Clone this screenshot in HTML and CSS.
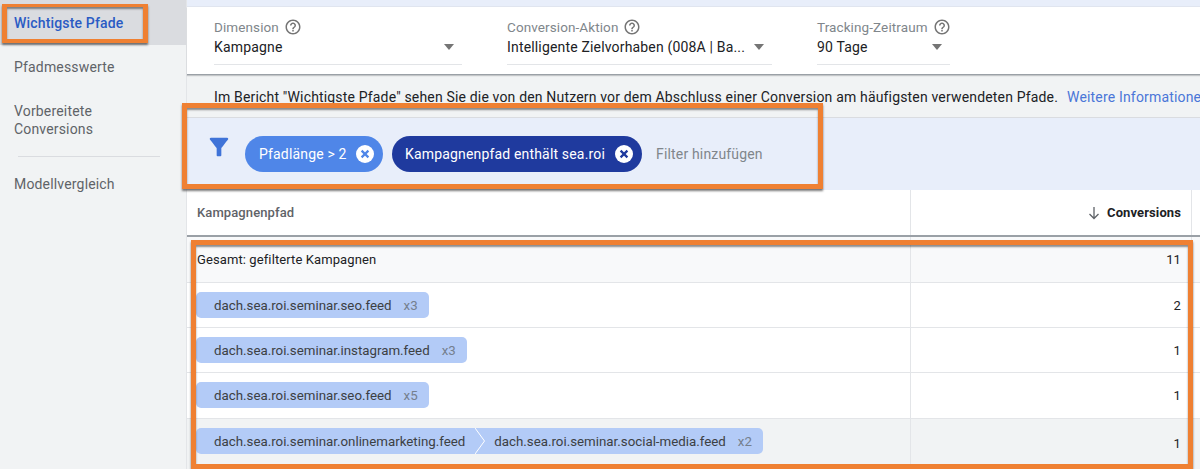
FILE: index.html
```html
<!DOCTYPE html>
<html lang="de">
<head>
<meta charset="utf-8">
<title>Wichtigste Pfade</title>
<link rel="stylesheet" href="styles.css">
</head>
<body>
<div class="page">
  <nav class="sidebar">
    <a class="nav-item active">Wichtigste Pfade</a>
    <a class="nav-item">Pfadmesswerte</a>
    <a class="nav-item multi">Vorbereitete Conversions</a>
    <div class="nav-divider"></div>
    <a class="nav-item last">Modellvergleich</a>
  </nav>
  <main class="main">
    <div class="top-strip"></div>
    <section class="controls">
      <div class="control c1">
        <div class="control-label">Dimension
          <svg class="help" viewBox="0 0 24 24"><path d="M11 18h2v-2h-2v2zm1-16C6.48 2 2 6.48 2 12s4.48 10 10 10 10-4.48 10-10S17.52 2 12 2zm0 18c-4.41 0-8-3.59-8-8s3.59-8 8-8 8 3.59 8 8-3.59 8-8 8zm0-14c-2.21 0-4 1.79-4 4h2c0-1.1.9-2 2-2s2 .9 2 2c0 2-3 1.75-3 5h2c0-2.25 3-2.5 3-5 0-2.21-1.79-4-4-4z"/></svg>
        </div>
        <div class="control-value"><span>Kampagne</span><i class="caret"></i></div>
      </div>
      <div class="control c2">
        <div class="control-label">Conversion-Aktion
          <svg class="help" viewBox="0 0 24 24"><path d="M11 18h2v-2h-2v2zm1-16C6.48 2 2 6.48 2 12s4.48 10 10 10 10-4.48 10-10S17.52 2 12 2zm0 18c-4.41 0-8-3.59-8-8s3.59-8 8-8 8 3.59 8 8-3.59 8-8 8zm0-14c-2.21 0-4 1.79-4 4h2c0-1.1.9-2 2-2s2 .9 2 2c0 2-3 1.75-3 5h2c0-2.25 3-2.5 3-5 0-2.21-1.79-4-4-4z"/></svg>
        </div>
        <div class="control-value"><span>Intelligente Zielvorhaben (008A | Ba...</span><i class="caret"></i></div>
      </div>
      <div class="control c3">
        <div class="control-label">Tracking-Zeitraum
          <svg class="help" viewBox="0 0 24 24"><path d="M11 18h2v-2h-2v2zm1-16C6.48 2 2 6.48 2 12s4.48 10 10 10 10-4.48 10-10S17.52 2 12 2zm0 18c-4.41 0-8-3.59-8-8s3.59-8 8-8 8 3.59 8 8-3.59 8-8 8zm0-14c-2.21 0-4 1.79-4 4h2c0-1.1.9-2 2-2s2 .9 2 2c0 2-3 1.75-3 5h2c0-2.25 3-2.5 3-5 0-2.21-1.79-4-4-4z"/></svg>
        </div>
        <div class="control-value"><span>90 Tage</span><i class="caret"></i></div>
      </div>
    </section>
    <section class="info">
      <span>Im Bericht "Wichtigste Pfade" sehen Sie die von den Nutzern vor dem Abschluss einer Conversion am häufigsten verwendeten Pfade.</span>
      <a class="info-link">Weitere Informationen</a>
    </section>
    <section class="filters">
      <svg class="filter-icon" viewBox="0 0 24 24"><path d="M4.25 5.61C6.27 8.2 10 13 10 13v6c0 .55.45 1 1 1h2c.55 0 1-.45 1-1v-6s3.72-4.8 5.74-7.39c.51-.66.04-1.61-.79-1.61H5.04c-.83 0-1.3.95-.79 1.61z"/></svg>
      <div class="pill pill-light">
        <span>Pfadlänge &gt; 2</span>
        <svg class="pill-x" viewBox="0 0 18 18"><circle cx="9" cy="9" r="9" fill="#fff"/><path d="M5.6 5.6l6.8 6.8M12.4 5.6l-6.8 6.8" stroke="#4f86e8" stroke-width="2.2"/></svg>
      </div>
      <div class="pill pill-dark">
        <span>Kampagnenpfad enthält sea.roi</span>
        <svg class="pill-x" viewBox="0 0 18 18"><circle cx="9" cy="9" r="9" fill="#fff"/><path d="M5.6 5.6l6.8 6.8M12.4 5.6l-6.8 6.8" stroke="#1f3a9e" stroke-width="2.2"/></svg>
      </div>
      <span class="add-filter">Filter hinzufügen</span>
    </section>
    <section class="table">
      <div class="row head">
        <div class="cell">Kampagnenpfad</div>
        <div class="cell num">
          <svg class="sort" viewBox="0 0 14 14"><path d="M7 1v11.500M2.500 8L7 12.500 11.500 8" fill="none" stroke="#5f6368" stroke-width="1.3"/></svg>
          <b>Conversions</b>
        </div>
        <div class="cell rest"></div>
      </div>
      <div class="row total">
        <div class="cell">Gesamt: gefilterte Kampagnen</div>
        <div class="cell num">11</div>
        <div class="cell rest"></div>
      </div>
      <div class="row">
        <div class="cell"><div class="path"><span>dach.sea.roi.seminar.seo.feed</span><em>x3</em></div></div>
        <div class="cell num">2</div>
        <div class="cell rest"></div>
      </div>
      <div class="row">
        <div class="cell"><div class="path"><span>dach.sea.roi.seminar.instagram.feed</span><em>x3</em></div></div>
        <div class="cell num">1</div>
        <div class="cell rest"></div>
      </div>
      <div class="row tall">
        <div class="cell"><div class="path"><span>dach.sea.roi.seminar.seo.feed</span><em>x5</em></div></div>
        <div class="cell num">1</div>
        <div class="cell rest"></div>
      </div>
      <div class="row hover">
        <div class="cell">
          <div class="path">
            <span>dach.sea.roi.seminar.onlinemarketing.feed</span>
            <svg class="chev" viewBox="0 0 10 26"><path d="M0 0l9.500 13L0 26" fill="none" stroke="#fff" stroke-width="1"/></svg>
            <span>dach.sea.roi.seminar.social-media.feed</span><em>x2</em>
          </div>
        </div>
        <div class="cell num">1</div>
        <div class="cell rest"></div>
      </div>
    </section>
  </main>
</div>
<div class="mark mark-nav"></div>
<div class="mark mark-filter"></div>
<div class="mark mark-table"></div>
</body>
</html>
```

FILE: styles.css
```css
* { box-sizing: border-box; }
html, body { margin: 0; height: 469px; overflow: hidden; }
body { font-family: Roboto, "Liberation Sans", sans-serif; font-size: 14px; letter-spacing: .17px; color: #202124; background: #fff; position: relative; }

.page { display: flex; height: 469px; width: 1200px; }

.sidebar { width: 187px; flex: none; background: #f1f3f4; border-right: 1px solid #e3e5e8; }
.nav-item { display: block; padding: 0 14px; color: #5f6368; height: 44px; line-height: 44px; }
.nav-item.active { height: 45px; line-height: 46px; background: #dadce0; color: #2a5bc4; font-weight: 500; }
.nav-item.multi { height: auto; line-height: 18px; padding: 13px 14px 0; width: 130px; }
.nav-divider { height: 1px; background: #dadce0; margin: 18px 26px 0 18px; }
.nav-item.last { margin-top: 5px; height: 44px; }

.main { flex: 1; min-width: 0; display: flex; flex-direction: column; }
.top-strip { height: 7px; background: #e8eefa; border-bottom: 1px solid #e0e5ef; flex: none; }

.controls { height: 68px; flex: none; background: #fff; display: flex; gap: 45px; padding: 11px 0 0 27px; border-bottom: 1px solid #9aa0a6; box-shadow: 0 1px 1px rgba(60,64,67,.25); position: relative; }
.control { height: 47px; border-bottom: 1px solid #e3e5e8; }
.c1 { width: 248px; }
.c2 { width: 265px; }
.c3 { width: 133px; }
.control-label { display: flex; align-items: center; gap: 5px; height: 18px; color: #80868b; font-size: 13.5px; letter-spacing: .1px; white-space: nowrap; }
.help { width: 18px; height: 18px; fill: #757575; flex: none; }
.control-value { display: flex; justify-content: space-between; align-items: center; height: 20px; margin-top: 1px; color: #202124; padding-right: 8px; white-space: nowrap; }
.caret { width: 0; height: 0; border-left: 5.5px solid transparent; border-right: 5.5px solid transparent; border-top: 6px solid #757575; }

.info { height: 43px; flex: none; background: #f1f3f4; border-bottom: 1px solid #dadce0; padding: 13px 0 0 27px; display: flex; white-space: nowrap; line-height: 18px; overflow: hidden; }
.info-link { margin-left: 9px; color: #4a76d8; }

.filters { height: 72px; flex: none; background: #e8eefa; display: flex; align-items: center; padding: 0 0 0 18px; }
.filter-icon { width: 28px; height: 28px; fill: #3f73d8; margin-right: 12px; margin-top: -15px; flex: none; }
.pill { height: 36px; border-radius: 18px; color: #fff; display: flex; align-items: center; justify-content: space-between; }
.pill-light { width: 138px; background: #4f86e8; padding: 0 9px 0 14px; margin-right: 9px; }
.pill-dark { width: 250px; background: #1f3a9e; padding: 0 9px 0 13px; margin-right: 14px; }
.pill-x { width: 18px; height: 18px; flex: none; }
.add-filter { color: #80868b; }

.table { flex: 1; min-height: 0; display: flex; flex-direction: column; }
.row { display: grid; grid-template-columns: 723px 281px 9px; height: 45px; flex: none; border-bottom: 1px solid #e3e5e8; font-size: 13px; letter-spacing: .1px; }
.cell { padding: 0 10px; display: flex; align-items: center; white-space: nowrap; min-width: 0; }
.cell + .cell { border-left: 1px solid #e3e5e8; }
.cell.rest { padding: 0; }
.num { justify-content: flex-end; }
.head { height: 47px; border-bottom: 2px solid #9aa0a6; color: #5f6368; font-weight: 500; }
.head b { color: #202124; font-weight: 700; }
.sort { width: 14px; height: 14px; margin-right: 6px; }
.total { height: 46px; background: #f8f9fa; }
.total .cell { align-items: flex-start; padding-top: 15px; }
.tall { height: 46px; }
.tall .cell { padding-bottom: 1px; }
.hover { background: #f1f3f4; height: 50px; border-bottom: 0; }
.hover .cell:first-child { padding-bottom: 6px; }
.hover .num { padding-bottom: 2px; }

.path { display: flex; align-items: center; height: 26px; margin-left: -1px; padding: 0 11px 0 18px; background: #b3cbf7; border-radius: 5px; color: #3c4043; font-size: 13.3px; letter-spacing: 0; }
.path em { font-style: normal; color: #757f8e; margin-left: 12px; }
.chev { width: 10px; height: 26px; margin: 0 9px 0 10px; flex: none; }

.mark { position: absolute; border: 5px solid #ef8032; box-shadow: 0 2px 2px rgba(50,50,50,.65), inset 0 2px 2px rgba(50,50,50,.55); pointer-events: none; }
.mark-nav { left: 2px; top: 4px; width: 146px; height: 39px; border-top-width: 3px; border-bottom-width: 4px; }
.mark-filter { left: 182px; top: 103px; width: 641px; height: 86px; }
.mark-table { left: 191px; top: 240px; width: 1002px; height: 229px; }
```
